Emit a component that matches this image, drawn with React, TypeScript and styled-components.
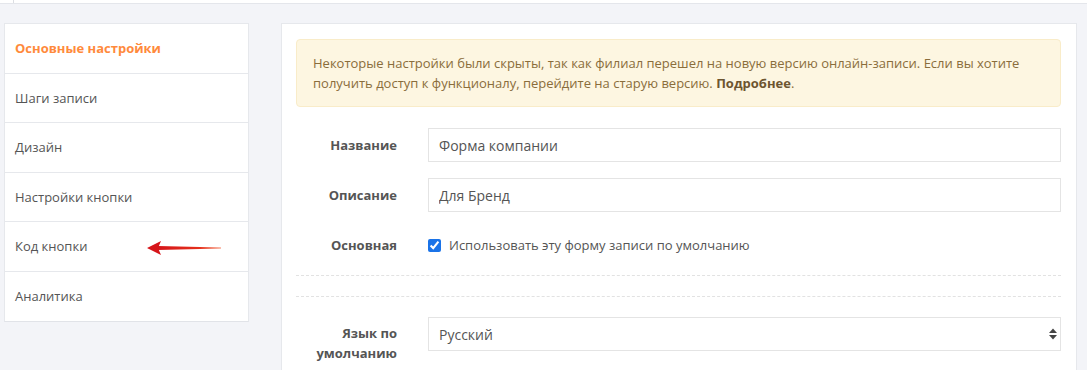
import React, { FC } from 'react'
import styled, { createGlobalStyle } from 'styled-components'

const GlobalStyle = createGlobalStyle`
  html, body {
    margin: 0;
    padding: 0;
    background: #f3f4f8;
    font-family: 'Open Sans', 'Noto Sans', sans-serif;
    font-size: 13px;
    color: #555;
    overflow: hidden;
  }
  * {
    box-sizing: border-box;
  }
`

const TopBar = styled.div`
  height: 4px;
  background: #fff;
  border-bottom: 1px solid #e4e6eb;
  display: flex;
`

const TopDivider = styled.div`
  width: 1px;
  margin-left: 13px;
  background: #dcdee3;
`

const Layout = styled.div`
  display: flex;
  align-items: flex-start;
  gap: 32px;
  padding: 19px 10px 0 4px;
`

const Sidebar = styled.nav`
  position: relative;
  width: 245px;
  flex: none;
  background: #fff;
  border: 1px solid #e6e8ec;
  border-bottom-color: #e1e3e8;
`

const NavItem = styled.div<{ $active?: boolean; $last?: boolean }>`
  height: 49.5px;
  display: flex;
  align-items: center;
  padding-left: 10px;
  border-bottom: ${({ $last }) => ($last ? 'none' : '1px solid #e6e8ec')};
  color: ${({ $active }) => ($active ? '#ff8a3c' : '#555')};
  font-weight: ${({ $active }) => ($active ? 700 : 400)};
`

const Arrow = styled.svg`
  position: absolute;
  left: 138px;
  top: 214px;
`

const Panel = styled.main`
  flex: 1;
  background: #fff;
  border: 1px solid #e6e8ec;
  border-bottom: none;
  padding: 15px 15px 20px 14px;
  min-height: 347px;
`

const Alert = styled.div`
  background: #fdf6e1;
  border: 1px solid #f9ecc9;
  border-radius: 4px;
  color: #8a6d3b;
  line-height: 20px;
  padding: 13px 16px 13px 16px;
  margin-bottom: 21px;

  b {
    font-weight: 700;
    color: #6d5530;
  }
`

const Row = styled.div<{ $top?: boolean; $gap?: number }>`
  display: grid;
  grid-template-columns: 101px 1fr;
  column-gap: 31px;
  align-items: ${({ $top }) => ($top ? 'start' : 'center')};
  margin-bottom: ${({ $gap }) => ($gap ?? 16)}px;
`

const Label = styled.label<{ $top?: boolean }>`
  text-align: right;
  font-weight: 700;
  color: #555;
  line-height: 20px;
  padding-top: ${({ $top }) => ($top ? '6px' : '0')};
`

const Input = styled.input`
  height: 34px;
  width: 100%;
  border: 1px solid #e4e4e4;
  padding: 0 10px;
  font-family: inherit;
  font-size: 14px;
  color: #555;
  outline: none;
`

const CheckLine = styled.div`
  display: flex;
  align-items: center;
  gap: 8px;
  height: 34px;
`

const Checkbox = styled.input`
  margin: 0;
  width: 13px;
  height: 13px;
  accent-color: #1a73e8;
`

const Divider = styled.hr`
  border: none;
  border-top: 1px dashed #e2e2e2;
  margin: 0 0 20px;
`

const SelectWrap = styled.div`
  position: relative;
`

const Select = styled.select`
  height: 34px;
  width: 100%;
  border: 1px solid #e4e4e4;
  padding: 0 10px;
  font-family: inherit;
  font-size: 14px;
  color: #555;
  background: #fff;
  appearance: none;
  outline: none;
`

const Caret = styled.svg`
  position: absolute;
  right: 3px;
  top: 11px;
  pointer-events: none;
`

const navItems = [
  'Основные настройки',
  'Шаги записи',
  'Дизайн',
  'Настройки кнопки',
  'Код кнопки',
  'Аналитика',
]

const App: FC = () => {
  return (
    <>
      <GlobalStyle />
      <TopBar>
        <TopDivider />
      </TopBar>
      <Layout>
        <Sidebar>
          {navItems.map((item, i) => (
            <NavItem key={item} $active={i === 0} $last={i === navItems.length - 1}>
              {item}
            </NavItem>
          ))}
          <Arrow width="82" height="20" viewBox="0 0 82 20">
            <defs>
              <linearGradient id="shaft" x1="0" y1="0" x2="1" y2="0">
                <stop offset="0" stopColor="#d6151a" />
                <stop offset="0.65" stopColor="#e4301c" />
                <stop offset="1" stopColor="#f58060" />
              </linearGradient>
            </defs>
            <polygon points="15,8 78,9.6 78,10.4 15,12" fill="url(#shaft)" />
            <polygon points="4,10 18,3 15,10 18,17" fill="#d6151a" />
          </Arrow>
        </Sidebar>
        <Panel>
          <Alert>
            Некоторые настройки были скрыты, так как филиал перешел на новую версию
            онлайн-записи. Если вы хотите получить доступ к функционалу, перейдите на
            старую версию. <b>Подробнее</b>.
          </Alert>
          <Row>
            <Label>Название</Label>
            <Input defaultValue="Форма компании" />
          </Row>
          <Row>
            <Label>Описание</Label>
            <Input defaultValue="Для Бренд" />
          </Row>
          <Row $gap={13}>
            <Label>Основная</Label>
            <CheckLine>
              <Checkbox type="checkbox" defaultChecked />
              <span>Использовать эту форму записи по умолчанию</span>
            </CheckLine>
          </Row>
          <Divider />
          <Divider />
          <Row $top $gap={0}>
            <Label $top>Язык по умолчанию</Label>
            <SelectWrap>
              <Select defaultValue="ru">
                <option value="ru">Русский</option>
              </Select>
              <Caret width="10" height="12" viewBox="0 0 10 12">
                <polygon points="5,0.5 9,5 1,5" fill="#444" />
                <polygon points="1,7 9,7 5,11.5" fill="#444" />
              </Caret>
            </SelectWrap>
          </Row>
        </Panel>
      </Layout>
    </>
  )
}

export default App
